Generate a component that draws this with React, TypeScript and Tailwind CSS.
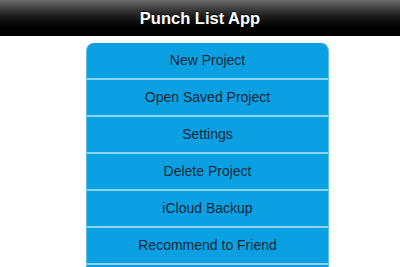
const items = [
  'New Project',
  'Open Saved Project',
  'Settings',
  'Delete Project',
  'iCloud Backup',
  'Recommend to Friend',
];

export default function App() {
  return (
    <div className="h-[267px] w-[400px] overflow-hidden bg-white font-['Liberation_Sans',Arial,sans-serif]">
      <header className="flex h-[36px] items-center justify-center bg-gradient-to-b from-[#6b6b6b] via-[#1c1c1c] via-45% to-black">
        <h1 className="text-[16.5px] font-bold text-white [text-shadow:0_-1px_0_rgba(0,0,0,0.8)]">Punch List App</h1>
      </header>
      <div className="pl-[86px] pt-[7px]">
        <ul className="w-[243px] overflow-hidden rounded-t-[8px] border-x border-[#5fc0ee] bg-[#0aa0e1]">
          {items.map((label) => (
            <li
              key={label}
              className="flex h-[37px] items-center justify-center border-b-2 border-[#8fd3f3] text-[14px] text-[#13273a]"
            >
              {label}
            </li>
          ))}
          <li className="h-[37px]" />
        </ul>
      </div>
    </div>
  );
}
